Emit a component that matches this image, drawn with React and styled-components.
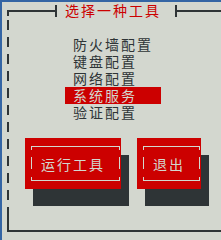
import React from 'react'
import styled, { createGlobalStyle } from 'styled-components'

const DARK = '#2e3436'
const LIGHT = '#d3d7cf'
const RED = '#cc0000'

const Global = createGlobalStyle`
  body {
    margin: 0;
    background: ${LIGHT};
    font-family: "Noto Sans CJK SC", "DejaVu Sans", sans-serif;
  }
`

const Screen = styled.div`
  width: 221px;
  height: 240px;
  box-sizing: border-box;
  background: ${LIGHT};
  border-top: 2px solid #3465a4;
  border-left: 2px solid #3465a4;
  overflow: hidden;
`

const Dialog = styled.div`
  margin-left: 5px;
  height: 230px;
  box-sizing: border-box;
  border-bottom: 2px solid ${DARK};
  background-image:
    linear-gradient(${DARK}, ${DARK}),
    repeating-linear-gradient(to bottom, ${DARK} 0 10px, transparent 10px 17px),
    linear-gradient(${DARK}, ${DARK});
  background-position: 0 8px, 0 18px, 0 205px;
  background-size: 2px 6px, 2px 187px, 2px 25px;
  background-repeat: no-repeat;
`

const TitleRow = styled.div`
  height: 17px;
  display: flex;
  align-items: center;
`

const Rule = styled.div`
  height: 2px;
  background: ${DARK};
  width: ${p => p.$w || 'auto'};
  flex: ${p => (p.$w ? 'none' : 1)};
`

const Tick = styled.div`
  width: 2px;
  height: 12px;
  background: ${DARK};
`

const Title = styled.div`
  margin: 0 14px 0 8px;
  color: ${RED};
  font-size: 14px;
  line-height: 17px;
  letter-spacing: 2px;
  white-space: nowrap;
`

const Menu = styled.div`
  padding-top: 17px;
`

const MenuItem = styled.div`
  margin-left: 58px;
  width: 96px;
  height: 17px;
  box-sizing: border-box;
  padding-left: 8px;
  font-size: 14px;
  line-height: 17px;
  letter-spacing: 2px;
  white-space: nowrap;
  color: ${p => (p.$active ? LIGHT : DARK)};
  background: ${p => (p.$active ? RED : 'transparent')};
`

const ButtonRow = styled.div`
  margin-top: 17px;
  padding-left: 18px;
  display: flex;
  gap: 16px;
`

const Button = styled.div`
  width: ${p => p.$w}px;
  height: 51px;
  box-sizing: border-box;
  padding: 8px 1px 8px 6px;
  display: flex;
  background: ${RED};
  box-shadow: 8px 17px 0 ${DARK};
`

const side = `linear-gradient(to bottom, ${LIGHT} 0 4px, transparent 4px 11px, ${LIGHT} 11px 23px, transparent 23px 31px, ${LIGHT} 31px 35px)`

const Inner = styled.div`
  flex: 1;
  display: flex;
  align-items: center;
  padding-left: 10px;
  border-top: 1px solid ${LIGHT};
  border-bottom: 1px solid ${LIGHT};
  background-image: ${side}, ${side};
  background-origin: border-box;
  background-position: left top, right top;
  background-size: 1px 100%;
  background-repeat: no-repeat;
  color: ${LIGHT};
  font-size: 14px;
  letter-spacing: 2px;
  white-space: nowrap;
`

const items = ['防火墙配置', '键盘配置', '网络配置', '系统服务', '验证配置']

export default function App() {
  return (
    <>
      <Global />
      <Screen>
        <Dialog>
          <TitleRow>
            <Rule $w="48px" />
            <Tick />
            <Title>选择一种工具</Title>
            <Tick />
            <Rule />
          </TitleRow>
          <Menu>
            {items.map((it, i) => (
              <MenuItem key={it} $active={i === 3}>{it}</MenuItem>
            ))}
          </Menu>
          <ButtonRow>
            <Button $w={96}><Inner>运行工具</Inner></Button>
            <Button $w={64}><Inner>退出</Inner></Button>
          </ButtonRow>
        </Dialog>
      </Screen>
    </>
  )
}
